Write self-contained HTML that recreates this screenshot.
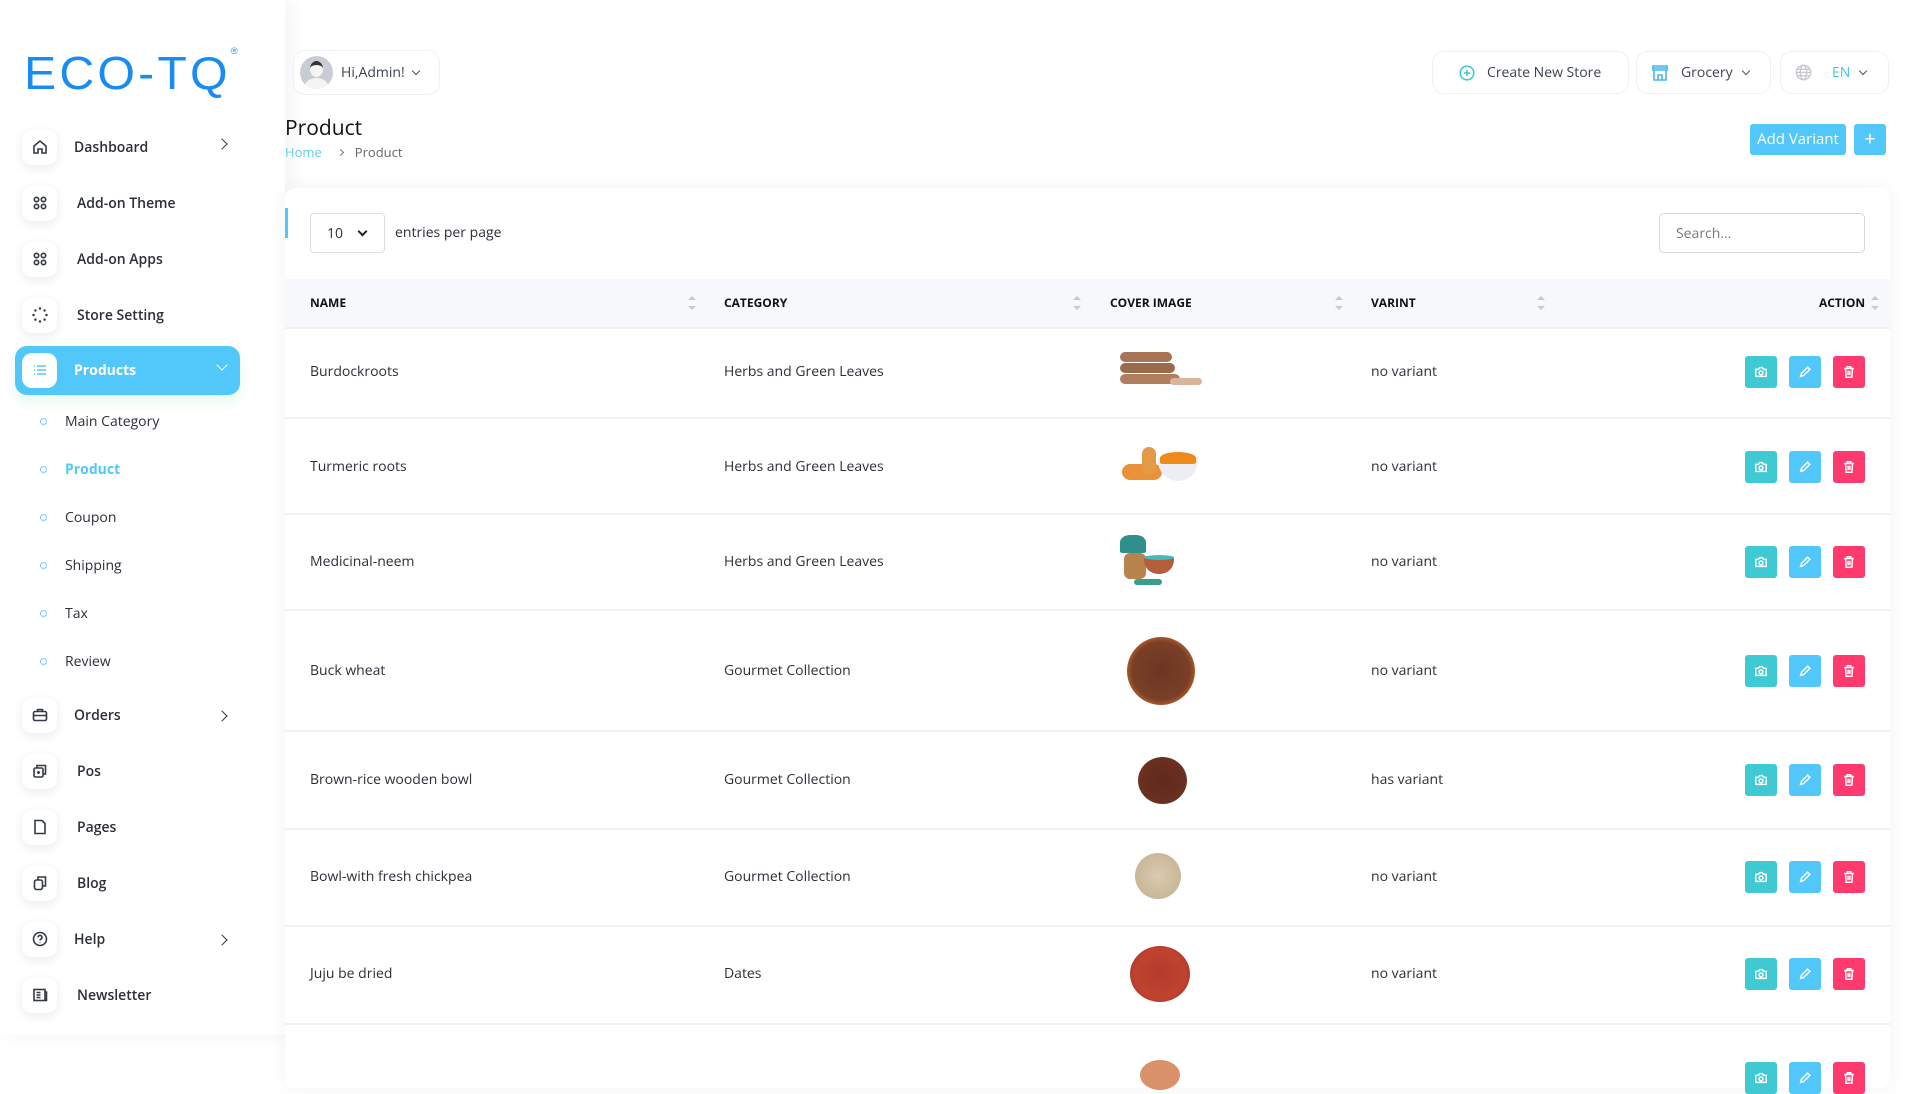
<!DOCTYPE html>
<html><head><meta charset="utf-8"><style>
*{box-sizing:border-box;margin:0;padding:0}
body{width:1920px;height:1080px;overflow:hidden;background:#fff;font-family:"Open Sans","Liberation Sans",sans-serif;color:#2b2f38;position:relative}
.abs{position:absolute}
.side{position:absolute;left:0;top:0;width:285px;height:1035px;background:#fff;box-shadow:6px 0 18px rgba(30,40,80,.05)}
.logo{left:24px;top:46px;font-family:"Liberation Sans",sans-serif;font-size:46px;font-weight:400;color:#1a8bf0;letter-spacing:3px;transform:scaleX(1.05);transform-origin:left}
.nav{position:absolute;left:22px;width:218px;height:38px;display:flex;align-items:center;font-size:14px;font-weight:600;color:#2b2f38}
.ib{width:35px;height:35px;border-radius:10px;background:#fff;box-shadow:0 3px 10px rgba(30,40,80,.09);display:flex;align-items:center;justify-content:center;margin-right:20px;flex:none}
.ib svg{width:16px;height:16px;fill:none;stroke:#333a45;stroke-width:1.6}
.chev{position:absolute;right:14px;top:12px;width:8px;height:8px;border-right:1.6px solid #333;border-top:1.6px solid #333;transform:rotate(45deg)}
.sub{position:absolute;left:40px;font-size:14px;color:#2b2f38;display:flex;align-items:center}
.sub i{width:7px;height:7px;border-radius:50%;border:1.6px solid #7fcbf0;margin-right:18px;display:inline-block}
.btn{position:absolute;border:1px solid #eef0f3;border-radius:12px;background:#fff;display:flex;align-items:center;font-size:14px;color:#3c4250}
.card{position:absolute;left:285px;top:188px;width:1605px;height:900px;background:#fff;border-radius:10px;box-shadow:0 0 20px rgba(30,40,80,.05)}
.th{position:absolute;font-size:12px;font-weight:700;color:#111;top:294px}
.sort{position:absolute;top:296px;width:8px;height:14px}
.sort:before,.sort:after{content:"";position:absolute;left:0;border-left:4px solid transparent;border-right:4px solid transparent}
.sort:before{top:0;border-bottom:4px solid #c5c9d0}.sort:after{bottom:0;border-top:4px solid #c5c9d0}
.cell{position:absolute;font-size:14px;color:#2b2f38}
.hr{position:absolute;left:285px;width:1605px;height:2px;background:#eff1f4}
.ab{position:absolute;width:32px;height:32px;border-radius:3px;display:flex;align-items:center;justify-content:center}
.ab svg{width:14px;height:14px;fill:none;stroke:#fff;stroke-width:1.7}
</style></head><body>
<div class="side"></div>
<div class="abs logo">ECO-TQ<span style="font-size:9px;vertical-align:top;font-weight:400">®</span></div>

<div class="nav" style="top:128px"><div class="ib"><svg viewBox="0 0 16 16"><path d="M2 7l6-5 6 5v7H10v-4H6v4H2z"/></svg></div><span style="margin-left:-3px">Dashboard</span><div class="chev"></div></div>
<div class="nav" style="top:184px"><div class="ib"><svg viewBox="0 0 16 16"><circle cx="4.5" cy="4.5" r="2.2"/><circle cx="11.5" cy="4.5" r="2.2"/><circle cx="4.5" cy="11.5" r="2.2"/><circle cx="11.5" cy="11.5" r="2.2"/></svg></div>Add-on Theme</div>
<div class="nav" style="top:240px"><div class="ib"><svg viewBox="0 0 16 16"><circle cx="4.5" cy="4.5" r="2.2"/><circle cx="11.5" cy="4.5" r="2.2"/><circle cx="4.5" cy="11.5" r="2.2"/><circle cx="11.5" cy="11.5" r="2.2"/></svg></div>Add-on Apps</div>
<div class="nav" style="top:296px"><div class="ib"><svg viewBox="0 0 16 16" style="stroke-width:2.4;stroke-linecap:round"><path d="M8 1.5v.1M12.6 3.4v.1M14.5 8v.1M12.6 12.6v.1M8 14.5v.1M3.4 12.6v.1M1.5 8v.1M3.4 3.4v.1"/></svg></div>Store Setting</div>
<div class="abs" style="left:15px;top:346px;width:225px;height:49px;border-radius:12px;background:#52c8fa;box-shadow:0 6px 14px rgba(80,200,120,.15)"></div>
<div class="nav" style="top:351px;color:#fff"><div class="ib" style="box-shadow:none"><svg viewBox="0 0 16 16" style="stroke:#52c8fa"><path d="M2 4h1M5 4h9M2 8h1M5 8h9M2 12h1M5 12h9"/></svg></div><span style="margin-left:-3px;font-weight:700">Products</span><div class="chev" style="border-color:#fff;transform:rotate(135deg);top:10px"></div></div>
<div class="sub" style="top:412px"><i></i>Main Category</div>
<div class="sub" style="top:460px;color:#52c8fa;font-weight:700"><i></i>Product</div>
<div class="sub" style="top:508px"><i></i>Coupon</div>
<div class="sub" style="top:556px"><i></i>Shipping</div>
<div class="sub" style="top:604px"><i></i>Tax</div>
<div class="sub" style="top:652px"><i></i>Review</div>
<div class="nav" style="top:696px"><div class="ib"><svg viewBox="0 0 16 16"><rect x="1.5" y="4.5" width="13" height="9" rx="1.5"/><path d="M5.5 4.5V2.5h5v2M1.5 8.5h13"/></svg></div><span style="margin-left:-3px">Orders</span><div class="chev" style="top:16px"></div></div>
<div class="nav" style="top:752px"><div class="ib"><svg viewBox="0 0 16 16"><rect x="2" y="5" width="9" height="9" rx="1.5"/><path d="M5 5V2.5h8.5V11H11M6.5 8v3M5 9.5h3"/></svg></div>Pos</div>
<div class="nav" style="top:808px"><div class="ib"><svg viewBox="0 0 16 16"><path d="M3 1.5h7l3 3v10H3z"/></svg></div>Pages</div>
<div class="nav" style="top:864px"><div class="ib"><svg viewBox="0 0 16 16"><rect x="2.5" y="5" width="8" height="9.5" rx="2"/><path d="M6 5V2h7.5v9H10.5"/></svg></div>Blog</div>
<div class="nav" style="top:920px"><div class="ib"><svg viewBox="0 0 16 16"><circle cx="8" cy="8" r="6.5"/><path d="M6 6.3a2 2 0 1 1 2.5 2c-.4.2-.5.5-.5 1.2M8 11.3v.4"/></svg></div><span style="margin-left:-3px">Help</span><div class="chev" style="top:16px"></div></div>
<div class="nav" style="top:976px"><div class="ib"><svg viewBox="0 0 16 16"><rect x="2" y="2.5" width="11" height="11"/><path d="M4.5 5.5h4M4.5 8h4M4.5 10.5h4M13 5h1.5v8.5H13"/></svg></div>Newsletter</div>

<div class="btn" style="left:293px;top:50px;width:147px;height:45px;padding-left:6px">
<div style="width:33px;height:33px;border-radius:50%;background:#c9ccd3;position:relative;overflow:hidden"><div style="position:absolute;left:10px;top:5px;width:13px;height:16px;border-radius:50%;background:#f4f4f4;border-top:4px solid #333"></div><div style="position:absolute;left:5px;top:22px;width:23px;height:16px;border-radius:50%;background:#f4f4f4"></div></div>
<span style="margin-left:8px">Hi,Admin!</span><span style="margin-left:8px;width:6px;height:6px;border-right:1.3px solid #555;border-bottom:1.3px solid #555;transform:rotate(45deg);margin-top:-4px"></span></div>
<div class="btn" style="left:1432px;top:51px;width:197px;height:43px;padding-left:26px"><svg width="16" height="16" viewBox="0 0 16 16" fill="none" stroke="#45c6dc" stroke-width="1.6"><circle cx="8" cy="8" r="6.8"/><path d="M8 5v6M5 8h6"/></svg><span style="margin-left:12px">Create New Store</span></div>
<div class="btn" style="left:1636px;top:51px;width:135px;height:43px;padding-left:14px"><svg width="18" height="18" viewBox="0 0 18 18" fill="none" stroke="#45b8e8" stroke-width="1.6"><path d="M2 2h14v4H2zM3 6v10h12V6M7 16v-5h4v5M2 4h14"/></svg><span style="margin-left:12px">Grocery</span><span style="margin-left:10px;width:6px;height:6px;border-right:1.3px solid #555;border-bottom:1.3px solid #555;transform:rotate(45deg);margin-top:-4px"></span></div>
<div class="btn" style="left:1780px;top:51px;width:109px;height:43px;padding-left:14px"><svg width="17" height="17" viewBox="0 0 16 16" fill="none" stroke="#c6c9ce" stroke-width="1.3"><circle cx="8" cy="8" r="6.8"/><ellipse cx="8" cy="8" rx="3" ry="6.8"/><path d="M1.2 8h13.6M2 5h12M2 11h12"/></svg><span style="margin-left:20px;color:#45c6dc">EN</span><span style="margin-left:10px;width:6px;height:6px;border-right:1.3px solid #555;border-bottom:1.3px solid #555;transform:rotate(45deg);margin-top:-4px"></span></div>

<div class="abs" style="left:285px;top:114px;font-size:21px;color:#111">Product</div>
<div class="abs" style="left:285px;top:143px;font-size:13px;color:#666"><span style="color:#5fd0e6">Home</span><span style="margin:0 12px 0 16px;display:inline-block;width:5px;height:5px;border-right:1.2px solid #777;border-top:1.2px solid #777;transform:rotate(45deg);vertical-align:2px"></span>Product</div>
<div class="abs" style="left:1750px;top:124px;width:96px;height:31px;background:#52c8fa;border-radius:3px;color:#fff;font-size:15px;text-align:center;line-height:31px">Add Variant</div>
<div class="abs" style="left:1854px;top:124px;width:32px;height:31px;background:#52c8fa;border-radius:3px;color:#fff;font-size:20px;text-align:center;line-height:29px">+</div>

<div class="card"></div>
<div class="abs" style="left:285px;top:208px;width:3px;height:30px;background:#52c8fa"></div>
<div class="abs" style="left:310px;top:213px;width:75px;height:40px;border:1px solid #dcdfe4;border-radius:4px;font-size:14px;padding:10px 0 0 16px">10<span style="position:absolute;left:48px;top:14px;width:7px;height:7px;border-right:2px solid #222;border-bottom:2px solid #222;transform:rotate(45deg)"></span></div>
<div class="abs" style="left:395px;top:223px;font-size:14px">entries per page</div>
<div class="abs" style="left:1659px;top:213px;width:206px;height:40px;border:1px solid #d4d7dc;border-radius:5px;font-size:14px;color:#777;padding:10px 0 0 16px">Search...</div>

<div class="abs" style="left:285px;top:279px;width:1605px;height:49px;background:#f7f8fb"></div>
<div class="hr" style="top:327px"></div>
<div class="th" style="left:310px">NAME</div><div class="sort" style="left:688px"></div>
<div class="th" style="left:724px">CATEGORY</div><div class="sort" style="left:1073px"></div>
<div class="th" style="left:1110px">COVER IMAGE</div><div class="sort" style="left:1335px"></div>
<div class="th" style="left:1371px">VARINT</div><div class="sort" style="left:1537px"></div>
<div class="th" style="left:1819px">ACTION</div><div class="sort" style="left:1871px"></div>

<div class="cell" style="left:310px;top:362px">Burdockroots</div><div class="cell" style="left:724px;top:362px">Herbs and Green Leaves</div><div class="cell" style="left:1371px;top:362px">no variant</div>
<div class="abs" style="left:1120px;top:352px;width:85px;height:40px">
<div class="abs" style="left:0;top:0;width:52px;height:10px;border-radius:5px;background:#a87456"></div><div class="abs" style="left:0;top:11px;width:55px;height:10px;border-radius:5px;background:#9b6a4c"></div><div class="abs" style="left:0;top:22px;width:60px;height:10px;border-radius:5px;background:#b07d5e"></div><div class="abs" style="left:50px;top:26px;width:32px;height:7px;border-radius:4px;background:#d8b59c"></div></div>
<div class="hr" style="top:417px"></div>
<div class="cell" style="left:310px;top:457px">Turmeric roots</div><div class="cell" style="left:724px;top:457px">Herbs and Green Leaves</div><div class="cell" style="left:1371px;top:457px">no variant</div>
<div class="abs" style="left:1120px;top:442px;width:85px;height:45px"><div class="abs" style="left:2px;top:22px;width:40px;height:16px;border-radius:8px;background:#e9923a"></div><div class="abs" style="left:22px;top:5px;width:14px;height:28px;border-radius:7px;background:#e39a45"></div><div class="abs" style="left:38px;top:15px;width:40px;height:24px;border-radius:0 0 20px 20px;background:#eceef3"></div><div class="abs" style="left:40px;top:10px;width:36px;height:12px;border-radius:50% 50% 10% 10%;background:#ec8a1c"></div></div>
<div class="hr" style="top:513px"></div>
<div class="cell" style="left:310px;top:552px">Medicinal-neem</div><div class="cell" style="left:724px;top:552px">Herbs and Green Leaves</div><div class="cell" style="left:1371px;top:552px">no variant</div>
<div class="abs" style="left:1118px;top:535px;width:60px;height:58px"><div class="abs" style="left:2px;top:0;width:26px;height:18px;background:#2e8f8c;border-radius:40% 40% 10% 10%"></div><div class="abs" style="left:6px;top:18px;width:22px;height:26px;border-radius:6px;background:#b8834c"></div><div class="abs" style="left:26px;top:21px;width:30px;height:18px;border-radius:3px 3px 14px 14px;background:#b55e3e"></div><div class="abs" style="left:26px;top:20px;width:30px;height:5px;background:#46b9bf;border-radius:50%"></div><div class="abs" style="left:16px;top:44px;width:28px;height:6px;background:#3a9d8f;border-radius:3px"></div></div>
<div class="hr" style="top:609px"></div>
<div class="cell" style="left:310px;top:661px">Buck wheat</div><div class="cell" style="left:724px;top:661px">Gourmet Collection</div><div class="cell" style="left:1371px;top:661px">no variant</div>
<div class="abs" style="left:1127px;top:637px;width:68px;height:68px;border-radius:50%;background:radial-gradient(circle,#6d3622 0,#7a3f27 60%,#a5572d 70%,#c46d3a 100%)"></div>
<div class="hr" style="top:730px"></div>
<div class="cell" style="left:310px;top:770px">Brown-rice wooden bowl</div><div class="cell" style="left:724px;top:770px">Gourmet Collection</div><div class="cell" style="left:1371px;top:770px">has variant</div>
<div class="abs" style="left:1138px;top:757px;width:49px;height:47px;border-radius:50%;background:radial-gradient(circle,#5e2a1c 0,#6a2f20 65%,#9a4d2a 100%)"></div>
<div class="hr" style="top:828px"></div>
<div class="cell" style="left:310px;top:867px">Bowl-with fresh chickpea</div><div class="cell" style="left:724px;top:867px">Gourmet Collection</div><div class="cell" style="left:1371px;top:867px">no variant</div>
<div class="abs" style="left:1135px;top:853px;width:46px;height:46px;border-radius:50%;background:radial-gradient(circle,#d9cbb1 0,#c9b797 70%,#c8a07a 100%)"></div>
<div class="hr" style="top:925px"></div>
<div class="cell" style="left:310px;top:964px">Juju be dried</div><div class="cell" style="left:724px;top:964px">Dates</div><div class="cell" style="left:1371px;top:964px">no variant</div>
<div class="abs" style="left:1130px;top:946px;width:60px;height:56px;border-radius:50%;background:radial-gradient(circle,#b33a2c 0,#c0432f 60%,#a8392a 80%,#e6e8ea 100%)"></div>
<div class="hr" style="top:1023px"></div>
<div class="abs" style="left:1140px;top:1060px;width:40px;height:30px;border-radius:50%;background:#d9926a"></div>

<div id="acts"></div>
<script>
var ys=[356,451,546,655,764,861,958,1062],h='';
ys.forEach(function(y){
h+='<div class="ab" style="left:1745px;top:'+y+'px;background:#3fcad3"><svg viewBox="0 0 16 16"><path d="M2 5h3l1.5-2h3L11 5h3v8H2z"/><circle cx="8" cy="9" r="2.2"/></svg></div>';
h+='<div class="ab" style="left:1789px;top:'+y+'px;background:#52c8fa"><svg viewBox="0 0 16 16"><path d="M3 13l1-3.5 7-7 2.5 2.5-7 7z"/></svg></div>';
h+='<div class="ab" style="left:1833px;top:'+y+'px;background:#ff3a6e"><svg viewBox="0 0 16 16"><path d="M2.5 4h11M6 4V2h4v2M4 4l.7 10h6.6L12 4M7 6.5v5M9 6.5v5"/></svg></div>';
});
document.getElementById('acts').innerHTML=h;
</script>
</body></html>
